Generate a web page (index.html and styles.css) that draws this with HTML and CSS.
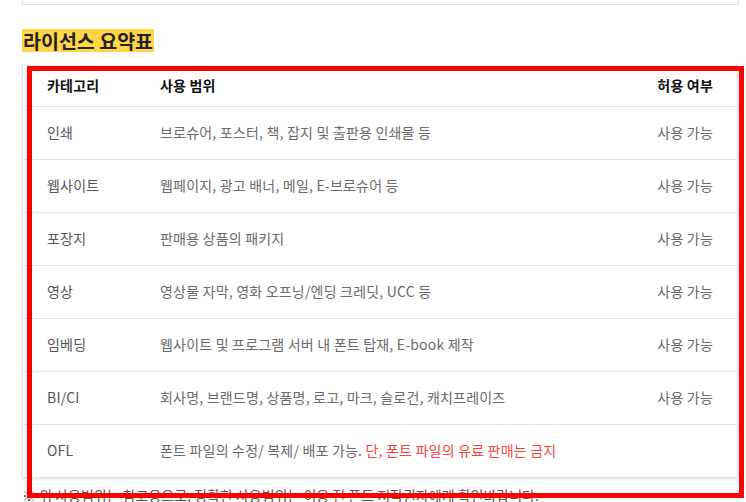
FILE: index.html
```html
<!DOCTYPE html>
<html>

<head>
    <meta name="viewport" content="width=device-width, initial-scale=1.0">
    <link rel="stylesheet" href="styles.css">
</head>

<body>
    <div class="page">
        <div class="prev-box"></div>

        <h2 class="title"><span class="mark">라이선스 요약표</span></h2>

        <div class="table">
            <div class="row head">
                <div>카테고리</div>
                <div>사용 범위</div>
                <div class="ok">허용 여부</div>
            </div>
            <div class="row">
                <div class="cat">인쇄</div>
                <div>브로슈어, 포스터, 책, 잡지 및 출판용 인쇄물 등</div>
                <div class="ok">사용 가능</div>
            </div>
            <div class="row">
                <div class="cat">웹사이트</div>
                <div>웹페이지, 광고 배너, 메일, E-브로슈어 등</div>
                <div class="ok">사용 가능</div>
            </div>
            <div class="row">
                <div class="cat">포장지</div>
                <div>판매용 상품의 패키지</div>
                <div class="ok">사용 가능</div>
            </div>
            <div class="row">
                <div class="cat">영상</div>
                <div>영상물 자막, 영화 오프닝/엔딩 크레딧, UCC 등</div>
                <div class="ok">사용 가능</div>
            </div>
            <div class="row">
                <div class="cat">임베딩</div>
                <div>웹사이트 및 프로그램 서버 내 폰트 탑재, E-book 제작</div>
                <div class="ok">사용 가능</div>
            </div>
            <div class="row">
                <div class="cat">BI/CI</div>
                <div>회사명, 브랜드명, 상품명, 로고, 마크, 슬로건, 캐치프레이즈</div>
                <div class="ok">사용 가능</div>
            </div>
            <div class="row last">
                <div class="cat">OFL</div>
                <div>폰트 파일의 수정/ 복제/ 배포 가능. <span class="warn">단, 폰트 파일의 유료 판매는 금지</span></div>
                <div class="ok"></div>
            </div>
        </div>

        <p class="note">※ 위 사용범위는 참고용으로, 정확한 사용범위는 이용 전 폰트 저작권자에게 확인바랍니다.</p>
    </div>

    <div class="highlight"></div>
</body>

</html>
```

FILE: styles.css
```css
body {
    margin: 0;
    font-family: "Noto Sans CJK KR", "Noto Sans", sans-serif;
    background-color: #fff;
    overflow: hidden;
}

.page {
    margin-left: 22px;
    width: 717px;
}

.prev-box {
    height: 4px;
    border: 1px solid #e2e2e2;
    border-top: none;
}

.title {
    margin: 24px 0 13px 0;
    font-size: 19.5px;
    line-height: 23px;
    font-weight: 700;
    color: #222;
}

.mark {
    display: inline-block;
    background-color: #ffd54a;
    padding: 0 1px;
}

.table {
    border: 1px solid #e4e4e4;
    box-shadow: 0 1px 3px rgba(0, 0, 0, 0.12);
    width: 716px;
    box-sizing: border-box;
}

.row {
    display: grid;
    grid-template-columns: 113px 1fr auto;
    align-items: center;
    height: 53px;
    padding: 0 24px 2px 24px;
    border-bottom: 1px solid #e4e4e4;
    box-sizing: border-box;
    font-size: 14px;
    letter-spacing: 0.2px;
    color: #6a6a6a;
}

.row.head {
    height: 41px;
    font-weight: 700;
    color: #111;
}

.row.last {
    border-bottom: none;
    height: 52px;
}

.cat {
    color: #555;
}

.ok {
    text-align: right;
}

.warn {
    color: #f2453d;
}

.note {
    margin: 7px 0 0 0;
    font-size: 14px;
    line-height: 20px;
    color: #555;
}

.highlight {
    position: absolute;
    left: 27px;
    top: 66px;
    width: 717px;
    height: 432px;
    border: 5px solid #ff0000;
    box-sizing: border-box;
}
```
